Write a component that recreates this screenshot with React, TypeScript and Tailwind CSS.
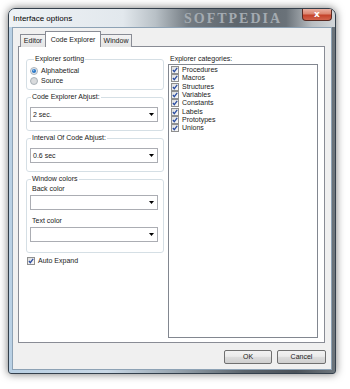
import React from "react";

const Check = () => (
  <svg width="8" height="8" viewBox="0 0 8 8" className="shrink-0">
    <defs>
      <linearGradient id="cbg" x1="0" y1="0" x2="1" y2="1">
        <stop offset="0" stopColor="#dcdcdc" />
        <stop offset="1" stopColor="#fbfbfb" />
      </linearGradient>
    </defs>
    <rect x="0.5" y="0.5" width="7" height="7" fill="url(#cbg)" stroke="#8f8f8f" />
    <path d="M1.9 4 L3.3 5.7 L6.2 1.8" stroke="#2d4ea2" strokeWidth="1.3" fill="none" />
  </svg>
);

const Radio = ({ on }: { on?: boolean }) => (
  <svg width="8" height="8" viewBox="0 0 8 8" className="shrink-0">
    <circle cx="4" cy="4" r="3.5" fill={on ? "#e6ecf2" : "#d9dbdd"} stroke="#9aa3ab" strokeWidth="0.8" />
    {on && <circle cx="4" cy="4" r="2.1" fill="#2d78c6" />}
    {on && <circle cx="3.5" cy="3.4" r="0.8" fill="#8fc0ee" />}
  </svg>
);

const Combo = ({ value }: { value?: string }) => (
  <div className="mx-[3px] w-[128px] h-[15px] bg-white border border-[#abadb3] flex items-center justify-between pl-[2px] pr-[3px]">
    <span>{value}</span>
    <svg width="5" height="3" viewBox="0 0 5 3">
      <path d="M0 0H5L2.5 3Z" fill="#000" />
    </svg>
  </div>
);

const items = [
  "Procedures",
  "Macros",
  "Structures",
  "Variables",
  "Constants",
  "Labels",
  "Prototypes",
  "Unions",
];

export default function App() {
  return (
    <div className="w-[350px] h-[389px] bg-white pt-[8px] pl-[8px] font-['Liberation_Sans',Arial,sans-serif] text-[7px] text-[#1a1a1a] leading-[8px]">
      <div className="w-[328px] h-[366px] flex flex-col rounded-t-[7px] rounded-b-[3px] border border-[#34404c] shadow-[0_0_9px_rgba(0,0,0,0.55)] bg-[linear-gradient(90deg,#b9d0e4_0%,#c9d8e6_30%,#9aa7b2_50%,#5c656d_72%,#4b5259_88%,#6d757c_100%)] overflow-hidden">
        {/* title bar */}
        <div className="h-[18px] flex items-start bg-[linear-gradient(90deg,#eef2f5_0%,#e2e8ed_35%,#b8c0c6_45%,#737b82_55%,#5e666d_70%,#6a7279_85%,#b9bec2_93%,#d2d6d9_100%)]">
          <div className="pl-[4px] pt-[5px] text-[8px] leading-[9px] text-black w-[175px]">Interface options</div>
          <div className="flex-1 pt-[3px] text-[14px] leading-[13px] tracking-[2px] font-['Liberation_Serif',serif] font-bold text-[#a4abb1]">
            SOFTPEDIA
          </div>
          <div className="mr-[3px] w-[30px] h-[12px] rounded-b-[4px] border border-t-0 border-[#5a2a22] bg-[linear-gradient(180deg,#ecb0a2_0%,#dc8670_45%,#c4422a_55%,#d2644c_100%)] flex items-center justify-center text-white text-[9px] font-bold leading-[9px] font-['DejaVu_Sans',sans-serif]">
            x
          </div>
        </div>
        {/* client */}
        <div className="mx-[3px] h-[343px] bg-[#f0f0f0] border border-[#8da2b5] flex flex-col pt-[3px]">
          {/* tabs */}
          <div className="relative z-10 -mb-[1px] flex items-end pl-[7px] h-[16px]">
            <div className="w-[26px] h-[13px] border border-b-0 border-[#898c95] bg-[linear-gradient(180deg,#f3f3f3,#e3e3e3)] flex items-center justify-center">
              Editor
            </div>
            <div className="-ml-[1px] w-[56px] h-[16px] border border-b-0 border-[#898c95] bg-white flex items-start justify-center pt-[4px]">
              Code Explorer
            </div>
            <div className="-ml-[1px] w-[32px] h-[13px] border border-b-0 border-[#898c95] bg-[linear-gradient(180deg,#f3f3f3,#e3e3e3)] flex items-center justify-center">
              Window
            </div>
          </div>
          {/* panel */}
          <div className="ml-[5px] w-[307px] h-[297px] border border-[#898c95] bg-white flex pl-[7px] pt-[8px] gap-[4px]">
            {/* left column */}
            <div className="w-[138px] flex flex-col">
              <fieldset className="border border-[#d5dfe5] rounded-[3px] pt-[3px] pb-[3px] pl-[3px]">
                <legend className="ml-[4px] px-[1px] h-[8px] leading-[8px]">Explorer sorting</legend>
                <div className="h-[10px] flex items-center gap-[3px]">
                  <Radio on />
                  <span>Alphabetical</span>
                </div>
                <div className="h-[10px] flex items-center gap-[3px]">
                  <Radio />
                  <span>Source</span>
                </div>
              </fieldset>
              <fieldset className="mt-[3px] border border-[#d5dfe5] rounded-[3px] pt-[6px] pb-[8px]">
                <legend className="ml-[4px] px-[1px] h-[8px] leading-[8px]">Code Explorer Abjust:</legend>
                <Combo value="2 sec." />
              </fieldset>
              <fieldset className="mt-[3px] border border-[#d5dfe5] rounded-[3px] pt-[6px] pb-[8px]">
                <legend className="ml-[4px] px-[1px] h-[8px] leading-[8px]">Interval Of Code Abjust:</legend>
                <Combo value="0.6 sec" />
              </fieldset>
              <fieldset className="mt-[3px] border border-[#d5dfe5] rounded-[3px] pt-[2px] pb-[10px]">
                <legend className="ml-[4px] px-[1px] h-[8px] leading-[8px]">Window colors</legend>
                <div className="ml-[5px] h-[8px]">Back color</div>
                <div className="mt-[2px]">
                  <Combo />
                </div>
                <div className="mt-[7px] ml-[5px] h-[8px]">Text color</div>
                <div className="mt-[2px]">
                  <Combo />
                </div>
              </fieldset>
              <div className="mt-[4px] flex items-center gap-[3px] h-[8px] pl-[1px]">
                <Check />
                <span>Auto Expand</span>
              </div>
            </div>
            {/* right column */}
            <div className="w-[150px] flex flex-col">
              <div className="h-[8px] pl-[2px]">Explorer categories:</div>
              <div className="mt-[1px] h-[274px] border border-[#828790] bg-white pt-[1px] pl-[2px]">
                {items.map((it) => (
                  <div key={it} className="h-[8.3px] flex items-center gap-[3px]">
                    <Check />
                    <span>{it}</span>
                  </div>
                ))}
              </div>
            </div>
          </div>
          {/* buttons */}
          <div className="mt-[7px] flex justify-end gap-[5px] pr-[5px]">
            <button className="w-[48px] h-[14px] border border-[#707070] rounded-[2px] bg-[linear-gradient(180deg,#f2f2f2,#ebebeb_45%,#dddddd_50%,#cfcfcf)] text-[7px] leading-[8px]">
              OK
            </button>
            <button className="w-[49px] h-[14px] border border-[#707070] rounded-[2px] bg-[linear-gradient(180deg,#f2f2f2,#ebebeb_45%,#dddddd_50%,#cfcfcf)] text-[7px] leading-[8px]">
              Cancel
            </button>
          </div>
        </div>
      </div>
    </div>
  );
}
